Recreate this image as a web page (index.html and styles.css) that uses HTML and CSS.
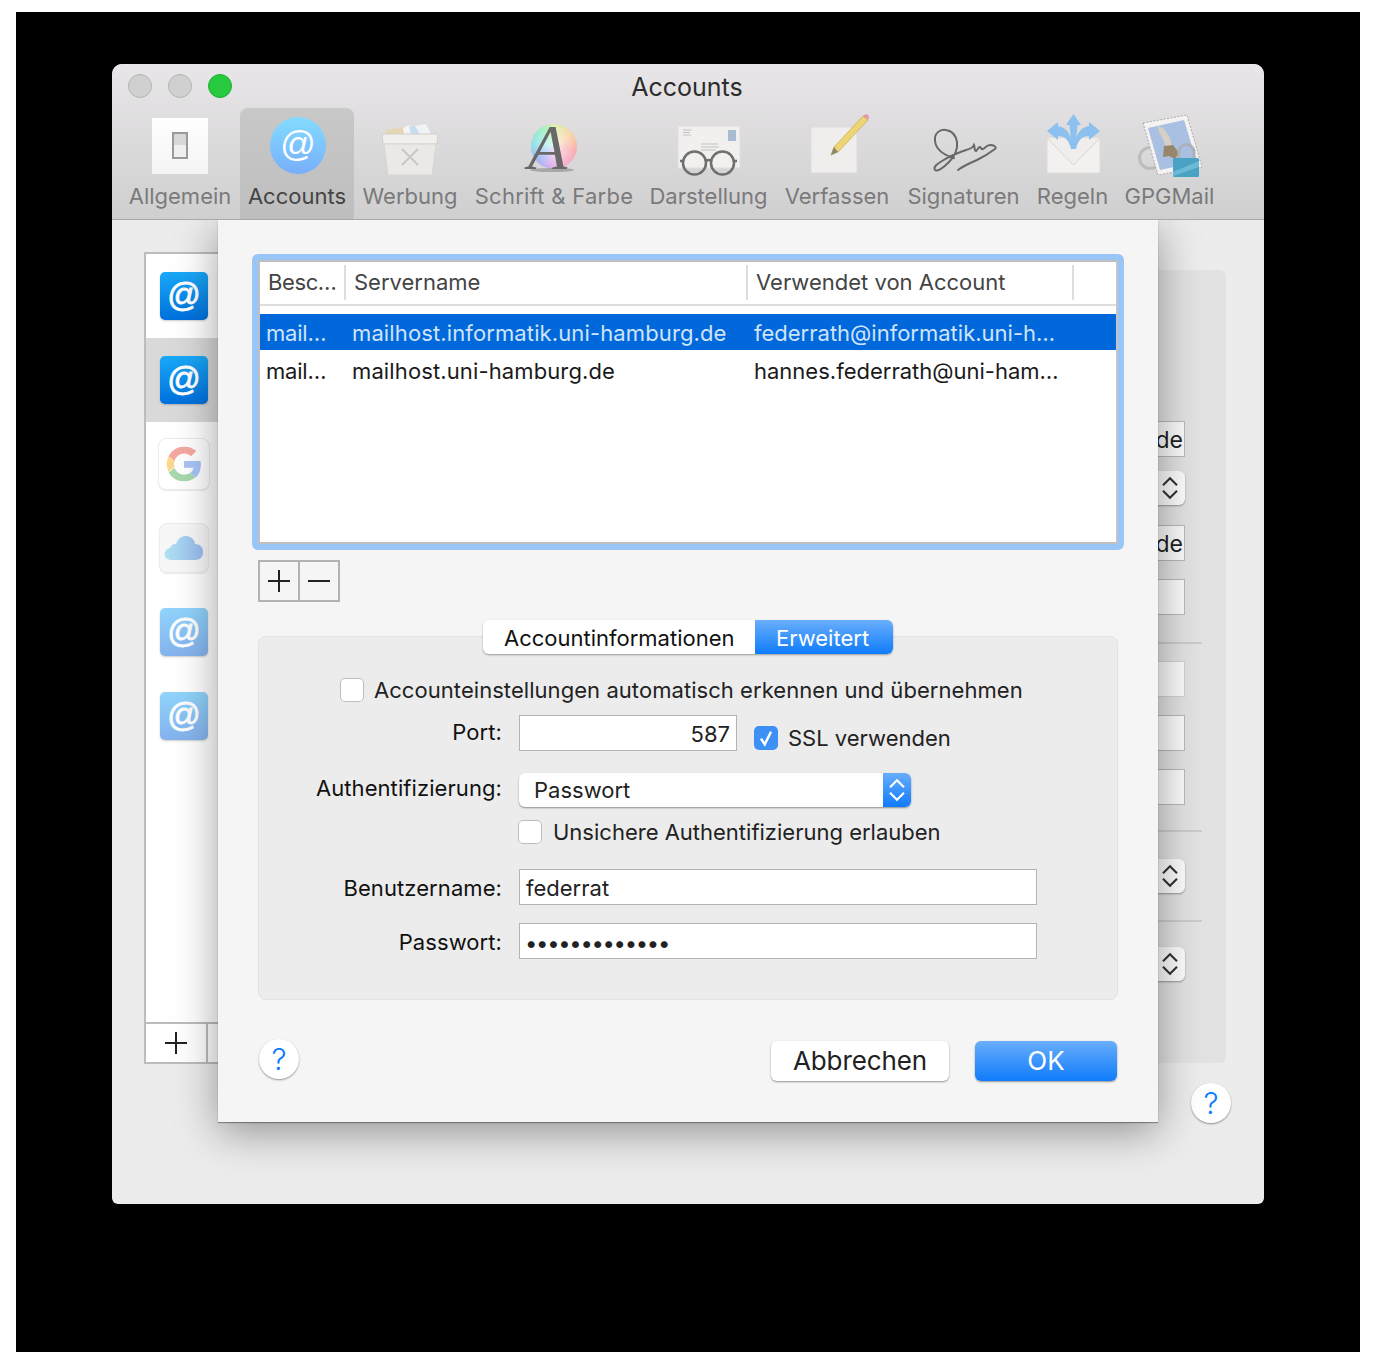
FILE: index.html
```html
<!DOCTYPE html>
<html lang="de">
<head>
<meta charset="utf-8">
<title>Accounts</title>
<link rel="stylesheet" href="styles.css">
</head>
<body>
<div class="frame">
<div class="window">
  <header class="chrome">
    <div class="titlebar">
      <div class="lights"><span class="light"></span><span class="light"></span><span class="light green"></span></div>
      <div class="title">Accounts</div>
    </div>
    <nav class="toolbar">
      <div class="tool">
        <svg class="ticon" viewBox="0 0 64 64"><defs><linearGradient id="sw" x1="0" y1="0" x2="0" y2="1"><stop offset="0" stop-color="#fff"/><stop offset="1" stop-color="#f4f4f4"/></linearGradient></defs><rect x="4" y="4" width="56" height="56" fill="url(#sw)"/><rect x="25" y="19" width="14" height="25" fill="#efefef" stroke="#9a9a9a" stroke-width="2"/><rect x="26" y="20" width="12" height="11" fill="#d8d8d8"/></svg>
        <span class="tlabel">Allgemein</span>
      </div>
      <div class="tool active">
        <svg class="ticon" viewBox="0 0 64 64"><defs><linearGradient id="at" x1="0" y1="0" x2="0" y2="1"><stop offset="0" stop-color="#83dcff"/><stop offset="1" stop-color="#78aefb"/></linearGradient></defs><ellipse cx="33" cy="31.500" rx="28" ry="28.500" fill="url(#at)"/><text x="33" y="42" class="at-glyph">@</text></svg>
        <span class="tlabel">Accounts</span>
      </div>
      <div class="tool">
        <svg class="ticon" viewBox="0 0 64 64"><path d="M8 16l18-3 3 7H8z" fill="#e7d6b4"/><path d="M25 14l6-3 5 9H26z" fill="#f4f4f4"/><path d="M31 13l6-1 5 8h-9z" fill="#c9ddf0"/><path d="M37 12l11-2 5 10H42z" fill="#f0f2f4"/><path d="M4 20h56l-1 10H5z" fill="#f0efec" stroke="#d0cfcb"/><path d="M6 30h52l-4 31H10z" fill="#ebe9e6" stroke="#d8d6d2"/><path d="M24 35l16 16M40 35L24 51" stroke="#c9c7c3" stroke-width="2" fill="none"/></svg>
        <span class="tlabel">Werbung</span>
      </div>
      <div class="tool">
        <span class="wheel-wrap"><span class="wheel"></span><span class="wheel-shadow"></span><span class="wheel-a">A</span></span>
        <span class="tlabel schrift">Schrift &amp; Farbe</span>
      </div>
      <div class="tool">
        <svg class="ticon" viewBox="0 0 64 64"><rect x="1" y="12" width="62" height="42" fill="#f1f0ee" stroke="#dfdedc"/><rect x="51" y="16" width="8" height="11" fill="#a9bdd2"/><path d="M6 16h9M6 18.500h7M6 21h8M24 30h17M24 33h18M24 36h15" stroke="#c2c1bf" stroke-width="1" fill="none"/><circle cx="17.500" cy="49" r="11.500" fill="none" stroke="#6f6f6f" stroke-width="2.500"/><circle cx="45.500" cy="49" r="11.500" fill="none" stroke="#6f6f6f" stroke-width="2.500"/><path d="M29 47q3-2 5 0M3 47l3 0M57 47l3 0" stroke="#6f6f6f" stroke-width="2.500" fill="none"/></svg>
        <span class="tlabel">Darstellung</span>
      </div>
      <div class="tool">
        <svg class="ticon" viewBox="0 0 64 64"><rect x="6" y="13" width="46" height="46" fill="#efeeec" stroke="#dddcda"/><path d="M26 41l3-8 29-31 5 4-30 32z" fill="#ecd577" stroke="#c9ad55" stroke-width=".8"/><path d="M26 41l3-8 4 5z" fill="#8b8670"/><path d="M58 2l2-1.500q2-1 3.500 1l.5 2-1 2.500z" fill="#e39aa3"/></svg>
        <span class="tlabel">Verfassen</span>
      </div>
      <div class="tool">
        <svg class="ticon wide" viewBox="0 0 72 64"><path d="M26 44C16 41 8 36 7 27 6 19 12 15 18 16 25 17 28 22 29 28 30 36 26 43 21 48 16 53 10 58 7 56 5 53 9 50 14 47 22 42 32 38 38 36 42 35 45 34 46 31 47 33 46 37 48 37 50 36 50 33 52 33 53 33 53 36 55 35 57 34 59 31 62 31 66 31 69 33 67 35 63 38 55 43 49 46 42 49 35 52 30 56" fill="none" stroke="#686868" stroke-width="2" stroke-linecap="round"/></svg>
        <span class="tlabel">Signaturen</span>
      </div>
      <div class="tool">
        <svg class="ticon" viewBox="0 0 64 64"><path d="M6 24h53v35H6z" fill="#f2f1ef" stroke="#dddcda"/><path d="M6 24l26.500 27L59 24" fill="#efeeec" stroke="#d8d7d5"/><path d="M32.500 0L25 11h3.500L31 35h3l2.500-24H40z" fill="#8bc0ef"/><path d="M6 17l11-9v4c8 1 14 8 15 23h-2c-2-9-6-13-13-13v4z" fill="#8bc0ef"/><path d="M59 17L48 8v4c-8 1-14 8-15 23h2c2-9 6-13 13-13v4z" fill="#8bc0ef"/></svg>
        <span class="tlabel">Regeln</span>
      </div>
      <div class="tool">
        <svg class="ticon" viewBox="0 0 64 64"><circle cx="12" cy="44" r="10.500" fill="none" stroke="#bcbcbc" stroke-width="3"/><path d="M5 9l44-8 15 52-44 8z" fill="#f4f3f1" stroke="#a9a9a9" stroke-dasharray="2 1.500"/><path d="M10 14l36-8 13 42-37 8z" fill="#a9c0e2"/><path d="M20 12l6 3 6 9 2 8-6 3-2-8-5-9z" fill="#d6d0c4"/><path d="M26 32l9-1 6 8-4 6-6-3-6 1z" fill="#97866a"/><path d="M41 44v-6a7.500 7.500 0 0 1 15 0v6" fill="none" stroke="#aab2b8" stroke-width="3"/><rect x="35" y="44" width="26" height="19" rx="1.500" fill="#4aa2c4"/><path d="M35 58l26-11v6l-26 9z" fill="#6dbad6"/></svg>
        <span class="tlabel">GPGMail</span>
      </div>
    </nav>
  </header>

  <div class="content">
    <div class="upper">
      <aside class="sidebar">
        <ul class="acct-list">
          <li class="acct"><span class="badge blue">@</span></li>
          <li class="acct selected"><span class="badge blue">@</span></li>
          <li class="acct"><span class="badge tile g-tile"><svg class="g-mark" viewBox="0 0 48 48"><path d="M24 10c3.700 0 6.900 1.300 9.400 3.600l6.900-6.900A23 23 0 0 0 24 1 23 23 0 0 0 3.400 13.700l8 6.200C13.300 14.100 18.200 10 24 10z" fill="#f5a8a0"/><path d="M46.500 24.500c0-1.600-.1-3.100-.4-4.500H24v9h12.700c-.6 2.900-2.200 5.300-4.700 7l7.600 5.900c4.400-4.100 6.900-10.200 6.900-17.400z" fill="#a8c4f8"/><path d="M11.400 28.100A14 14 0 0 1 10.600 24c0-1.500.3-2.900.8-4.100l-8-6.200A23 23 0 0 0 1 24c0 3.700.9 7.200 2.400 10.300z" fill="#fbd98c"/><path d="M24 47c6.200 0 11.400-2 15.200-5.500L32 36c-2 1.400-4.600 2.200-8 2.200-5.800 0-10.700-3.900-12.500-9.200l-8 6.200A23 23 0 0 0 24 47z" fill="#a8d8ae"/></svg></span></li>
          <li class="acct"><span class="badge tile cloud-tile"><svg class="cloud" viewBox="0 0 40 26"><defs><linearGradient id="cl" x1="0" y1="0" x2="1" y2="0"><stop offset="0" stop-color="#b0e2f2"/><stop offset="1" stop-color="#9abcf0"/></linearGradient></defs><path d="M7 25a6 6 0 0 1-1-12 6 6 0 0 1 6-4C14 3 18 1 22 1c5 0 9 4 9 8 5 0 8 3 8 8s-3 8-8 8z" fill="url(#cl)"/></svg></span></li>
          <li class="acct"><span class="badge pale">@</span></li>
          <li class="acct"><span class="badge pale">@</span></li>
        </ul>
        <div class="side-tools">
          <span class="side-btn"><svg class="plus" viewBox="0 0 24 24"><path d="M12 1v22M1 12h22" stroke="#222" stroke-width="2" fill="none"/></svg></span>
          <span class="side-btn2"></span>
        </div>
      </aside>
      <section class="pane">
        <div class="p-row p-a"><span class="p-field txt">de</span></div>
        <div class="p-row p-b"><span class="p-step"><svg class="chev" viewBox="0 0 14 20"><path d="M2 8l5-5 5 5M2 12l5 5 5-5" fill="none" stroke="#333" stroke-width="1.500"/></svg></span></div>
        <div class="p-row p-c"><span class="p-field txt">de</span></div>
        <div class="p-row p-d"><span class="p-field"></span></div>
        <div class="p-sep p-e"></div>
        <div class="p-row p-f"><span class="p-field dim"></span></div>
        <div class="p-row p-g"><span class="p-field"></span></div>
        <div class="p-row p-g"><span class="p-field"></span></div>
        <div class="p-sep p-h"></div>
        <div class="p-row p-i"><span class="p-step"><svg class="chev" viewBox="0 0 14 20"><path d="M2 8l5-5 5 5M2 12l5 5 5-5" fill="none" stroke="#333" stroke-width="1.500"/></svg></span></div>
        <div class="p-sep p-j"></div>
        <div class="p-row p-k"><span class="p-step"><svg class="chev" viewBox="0 0 14 20"><path d="M2 8l5-5 5 5M2 12l5 5 5-5" fill="none" stroke="#333" stroke-width="1.500"/></svg></span></div>
      </section>
    </div>
    <div class="help-row"><span class="help">?</span></div>

    <div class="sheet">
      <div class="ring">
        <div class="table">
          <div class="thead">
            <span class="th c1">Besc…</span>
            <span class="th c2">Servername</span>
            <span class="th c3">Verwendet von Account</span>
          </div>
          <div class="tr sel first">
            <span class="td c1">mail…</span>
            <span class="td c2">mailhost.informatik.uni-hamburg.de</span>
            <span class="td c3">federrath@informatik.uni-h…</span>
          </div>
          <div class="tr second">
            <span class="td c1">mail…</span>
            <span class="td c2">mailhost.uni-hamburg.de</span>
            <span class="td c3">hannes.federrath@uni-ham…</span>
          </div>
        </div>
      </div>
      <div class="pm">
        <span class="pm-btn"><svg class="plus" viewBox="0 0 24 24"><path d="M12 1v22M1 12h22" stroke="#222" stroke-width="2" fill="none"/></svg></span>
        <span class="pm-btn"><svg class="plus" viewBox="0 0 24 24"><path d="M1 12h22" stroke="#222" stroke-width="2" fill="none"/></svg></span>
      </div>
      <div class="tabs">
        <span class="tab">Accountinformationen</span>
        <span class="tab on">Erweitert</span>
      </div>
      <div class="box">
        <label class="row auto-row"><span class="check"></span><span class="ctext auto-text">Accounteinstellungen automatisch erkennen und übernehmen</span></label>
        <div class="row port-row">
          <span class="lbl lbl-port">Port:</span>
          <span class="field port">587</span>
          <span class="ssl"><span class="check checked"><svg class="tick" viewBox="0 0 16 16"><path d="M4 8.500l3 4.500 5-10" fill="none" stroke="#fff" stroke-width="2"/></svg></span><span class="ctext">SSL verwenden</span></span>
        </div>
        <div class="row auth-row">
          <span class="lbl">Authentifizierung:</span>
          <span class="select"><span class="sel-text">Passwort</span><span class="sel-arrow"><svg class="chev" viewBox="0 0 14 20"><path d="M2 8l5-5 5 5M2 12l5 5 5-5" fill="none" stroke="#fff" stroke-width="1.500"/></svg></span></span>
        </div>
        <div class="row unsafe-row">
          <span class="lbl"></span>
          <span class="check"></span><span class="ctext">Unsichere Authentifizierung erlauben</span>
        </div>
        <div class="row user-row">
          <span class="lbl">Benutzername:</span>
          <span class="field wide-field">federrat</span>
        </div>
        <div class="row pass-row">
          <span class="lbl">Passwort:</span>
          <span class="field wide-field dots">•••••••••••••</span>
        </div>
      </div>
      <div class="footer">
        <span class="help">?</span>
        <span class="btn cancel">Abbrechen</span>
        <span class="btn ok">OK</span>
      </div>
    </div>
  </div>
</div>
</div>
</body>
</html>
```

FILE: styles.css
```css
* { box-sizing: border-box; }
html, body { margin: 0; }
body { background: #fff; padding: 12px 16px; font-family: Inter, "Liberation Sans", sans-serif; color: #222; font-size: 22px; }
.frame { background: #000; height: 1340px; padding: 52px 96px 0; }
.window { width: 1152px; height: 1140px; border-radius: 10px 10px 6px 6px; overflow: hidden; background: #ececec; display: flex; flex-direction: column; }

.chrome { height: 156px; background: linear-gradient(#e8e6e8, #d0cfd0); border-bottom: 1px solid #a8a8a8; position: relative; z-index: 3; display: flex; flex-direction: column; }
.titlebar { height: 44px; display: flex; align-items: center; position: relative; justify-content: center; }
.lights { position: absolute; left: 16px; top: 10px; display: flex; gap: 16px; }
.light { width: 24px; height: 24px; border-radius: 50%; background: #d0d0d0; border: 1px solid #b4b4b4; }
.light.green { background: #27c93f; border-color: #1fb032; }
.title { font-size: 25px; color: #2c2c2c; margin: 2px 2px 0 0; }
.toolbar { display: grid; grid-template-columns: 120px 114px 112px 176px 133px 124px 129px 89px 105px; padding-left: 8px; flex: 1; }
.tool { padding-top: 6px; display: flex; flex-direction: column; align-items: center; border-radius: 8px 8px 0 0; min-width: 0; }
.tool.active { background: linear-gradient(#c9c8c9, #bfbebf); }
.tool.active .tlabel { color: #444; }
.ticon { width: 64px; height: 64px; display: block; flex: none; }
.ticon.wide { width: 72px; }
.tlabel { color: #7a7a7a; font-size: 22px; line-height: 28px; margin-top: 4px; white-space: nowrap; }
.tlabel.schrift { letter-spacing: .28px; }
.at-glyph { font-family: "Liberation Sans", sans-serif; font-size: 35px; fill: #fff; text-anchor: middle; }
.wheel-wrap { width: 64px; height: 64px; position: relative; display: block; flex: none; }
.wheel { position: absolute; left: 9px; top: 10px; width: 46px; height: 45px; border-radius: 50%; background: radial-gradient(rgba(255,255,255,.75), rgba(255,255,255,0) 75%), conic-gradient(#dcefa8, #f8d0a0 55deg, #f8a8a8 100deg, #f4a8d8 165deg, #c0a8f0 205deg, #98b0f0 235deg, #88e0e8 280deg, #98f0b8 330deg, #dcefa8); }
.wheel-shadow { position: absolute; left: 8px; top: 54px; width: 44px; height: 4px; border-radius: 50%; background: rgba(0,0,0,.22); }
.wheel-a { position: absolute; left: 6px; top: 2px; font-family: "Liberation Serif", serif; font-style: italic; font-size: 64px; line-height: 64px; color: #686868; }

.content { flex: 1; position: relative; display: flex; flex-direction: column; padding: 32px 33px 0 32px; }
.upper { display: flex; height: 812px; }
.sidebar { width: 90px; height: 812px; border: 2px solid #bcbcbc; border-right: 0; background: #fff; display: flex; flex-direction: column; flex: none; }
.acct-list { list-style: none; margin: 0; padding: 0; flex: 1; }
.acct { height: 84px; display: flex; align-items: center; padding-left: 14px; }
.acct.selected { background: #d9d9d9; }
.badge { width: 48px; height: 48px; border-radius: 5px; display: flex; align-items: center; justify-content: center; color: #fff; font-family: "Liberation Sans", sans-serif; font-size: 33px; line-height: 40px; padding-bottom: 3px; -webkit-text-stroke: .8px #fff; box-shadow: 0 1px 2px rgba(0,0,0,.2); }
.badge.blue { background: linear-gradient(#1aa8f8, #0070dc); }
.badge.pale { background: linear-gradient(#90d4fb, #84b2ed); }
.badge.tile { background: #fff; border: 1px solid #ececec; padding: 0; box-shadow: 0 1px 1px rgba(0,0,0,.08); }
.g-tile { width: 52px; height: 52px; border-radius: 8px; margin-left: -2px; }
.g-mark { width: 36px; height: 36px; }
.badge.cloud-tile { width: 50px; height: 50px; border-radius: 8px; margin-left: -1px; background: #f7f7f7; }
.cloud { width: 40px; height: 26px; }
.side-tools { height: 40px; border-top: 2px solid #bcbcbc; display: flex; flex: none; }
.side-btn { width: 62px; border-right: 2px solid #bcbcbc; display: flex; align-items: center; justify-content: center; }
.side-btn2 { flex: 1; }
.plus { width: 24px; height: 24px; }

.pane { flex: 1; margin: 18px 5px 0 15px; height: 793px; background: #e2e2e2; border-radius: 6px; padding: 151px 0 0; }
.p-row { display: flex; justify-content: flex-end; padding-right: 41px; }
.p-field { width: 60px; height: 36px; background: #fafafa; border: 1px solid #b8b8b8; font-size: 23px; line-height: 36px; text-align: right; padding-right: 1px; color: #222; }
.p-field.dim { border-color: #d0d0d0; }
.p-step { width: 60px; height: 34px; background: #fcfcfc; border-radius: 6px; box-shadow: 0 1px 2px rgba(0,0,0,.35); display: flex; justify-content: flex-end; align-items: center; padding-right: 5px; }
.chev { width: 20px; height: 28px; flex: none; }
.p-sep { height: 2px; background: #cbcbcb; margin-right: 24px; }
.p-b { margin-top: 14px; }
.p-c { margin-top: 20px; }
.p-d { margin-top: 18px; }
.p-e { margin-top: 27px; }
.p-f { margin-top: 17px; }
.p-g { margin-top: 18px; }
.p-h { margin-top: 25px; }
.p-i { margin-top: 27px; }
.p-j { margin-top: 27px; }
.p-k { margin-top: 25px; }

.help-row { display: flex; justify-content: flex-end; margin-top: 19px; }
.help { width: 40px; height: 40px; border-radius: 50%; background: #fff; color: #0a7bff; font-size: 30px; font-weight: 300; line-height: 40px; text-align: center; box-shadow: 0 1px 2px rgba(0,0,0,.4); flex: none; }

.sheet { position: absolute; left: 106px; top: 0; width: 940px; height: 902px; background: #f5f5f5; padding: 34px 34px 0; box-shadow: 0 1px 1px rgba(0,0,0,.35), 0 10px 40px rgba(0,0,0,.38); z-index: 2; }
.ring { height: 296px; border: 6px solid #9ac6f7; border-radius: 6px; }
.table { height: 284px; background: #fff; border: 2px solid #bfbfbf; border-right-color: #c4c4c4; }
.thead { display: grid; grid-template-columns: 86px 402px 326px; height: 44px; border-bottom: 2px solid #dedede; padding-top: 3px; }
.th { color: #444; padding-left: 8px; border-right: 2px solid #dedede; height: 35px; line-height: 34px; font-size: 22px; white-space: nowrap; }
.th.c1 { letter-spacing: -.4px; }
.tr { display: grid; grid-template-columns: 86px 402px 326px; }
.tr.first { height: 36px; margin-top: 8px; background: #0068da; }
.tr.second { height: 38px; }
.tr.sel .td { color: #cfe4fb; }
.td { padding-left: 6px; line-height: 38px; white-space: nowrap; font-size: 22px; color: #1a1a1a; }
.td.c2 { letter-spacing: .12px; }
.td.c1 { letter-spacing: -.2px; }
.tr.second .td { line-height: 42px; }
.pm { display: flex; width: 82px; height: 42px; margin: 10px 0 0 6px; border: 2px solid #b2b2b2; }
.pm-btn { flex: 1; display: flex; align-items: center; justify-content: center; }
.pm-btn + .pm-btn { border-left: 2px solid #b2b2b2; }
.tabs { display: flex; margin: 18px 0 -18px 231px; width: 410px; height: 34px; background: #fff; border-radius: 6px; box-shadow: 0 1px 2px rgba(0,0,0,.35); position: relative; z-index: 1; overflow: hidden; }
.tab { height: 34px; line-height: 36px; padding: 0 21px; color: #111; font-size: 22px; white-space: nowrap; }
.tab:first-child { flex: 1; min-width: 0; padding-right: 0; }
.tab.on { background: linear-gradient(#69aefb, #0f7bfb); color: #fff; width: 138px; flex: none; }
.box { margin: 0 6px; height: 364px; background: #ececec; border: 1px solid #e2e2e2; border-radius: 8px; padding-top: 41px; }
.row { display: flex; align-items: flex-start; }
.auto-row { margin-left: 81px; height: 24px; align-items: center; gap: 10px; }
.auto-text { letter-spacing: .055px; }
.check { width: 24px; height: 24px; border-radius: 5px; background: #fff; box-shadow: 0 0 0 1px #bdbdbd inset; display: flex; align-items: center; justify-content: center; flex: none; }
.check.checked { background: #3d91f5; box-shadow: none; }
.tick { width: 20px; height: 20px; }
.ctext { font-size: 22px; line-height: 26px; white-space: nowrap; color: #222; }
.lbl { width: 243px; margin-right: 17px; text-align: right; font-size: 22px; color: #111; flex: none; white-space: nowrap; line-height: 30px; letter-spacing: .08px; }
.field { height: 36px; background: #fff; border: 1px solid #b4b4b4; font-size: 22px; line-height: 36px; padding: 0 6px; color: #222; }
.port-row { margin-top: 13px; }
.lbl-port { line-height: 34px; }
.port { width: 218px; text-align: right; }
.ssl { display: flex; align-items: center; gap: 10px; margin: 10px 0 0 17px; }
.auth-row { margin-top: 22px; }
.select { width: 392px; height: 34px; background: #fff; border-radius: 6px; box-shadow: 0 1px 2px rgba(0,0,0,.4); display: flex; overflow: hidden; }
.sel-text { flex: 1; padding-left: 15px; line-height: 34px; font-size: 22px; color: #222; }
.sel-arrow { width: 28px; background: linear-gradient(#69aefb, #0f7bfb); display: flex; align-items: center; justify-content: center; }
.unsafe-row { margin-top: 13px; height: 24px; align-items: center; }
.unsafe-row .check { margin-left: -1px; }
.unsafe-row .ctext { margin-left: 11px; }
.user-row { margin-top: 25px; }
.user-row .lbl, .pass-row .lbl { line-height: 38px; }
.wide-field { width: 518px; }
.pass-row { margin-top: 16px; }
.dots { font-size: 22px; letter-spacing: -1.3px; line-height: 38px; padding-left: 5px; }
.footer { display: flex; margin: 39px 7px 0; align-items: flex-start; }
.btn { height: 40px; border-radius: 6px; margin-top: 2px; font-size: 26px; line-height: 40px; text-align: center; box-shadow: 0 1px 2px rgba(0,0,0,.4); }
.cancel { width: 178px; background: #fff; color: #222; margin-left: auto; letter-spacing: -.1px; }
.ok { width: 142px; margin-left: 26px; background: linear-gradient(#69aefb, #0f7bfb); color: #fff; }
```
